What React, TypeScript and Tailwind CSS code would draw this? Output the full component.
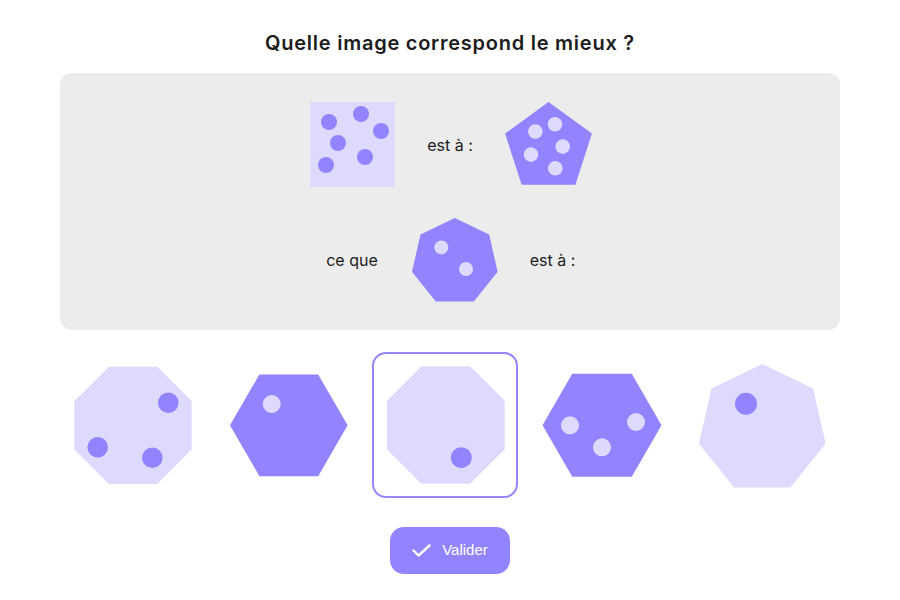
const DARK = "#9184fe";
const LIGHT = "#dedafe";

type Dot = [number, number];

function poly(n: number, cx: number, cy: number, r: number, start: number) {
  const pts: string[] = [];
  for (let i = 0; i < n; i++) {
    const a = ((start + (i * 360) / n) * Math.PI) / 180;
    pts.push(`${(cx + r * Math.cos(a)).toFixed(2)},${(cy + r * Math.sin(a)).toFixed(2)}`);
  }
  return pts.join(" ");
}

function Dots({ dots, r, fill }: { dots: Dot[]; r: number; fill: string }) {
  return (
    <>
      {dots.map(([x, y], i) => (
        <circle key={i} cx={x} cy={y} r={r} fill={fill} />
      ))}
    </>
  );
}

function Option({ selected, children }: { selected?: boolean; children: React.ReactNode }) {
  return (
    <div
      className={
        "w-[146px] h-[146px] rounded-[14px] border-2 shrink-0 " +
        (selected ? "border-[#9487fe]" : "border-transparent")
      }
    >
      <svg width="146" height="146" viewBox="0 0 146 146" className="-m-[2px] block">
        {children}
      </svg>
    </div>
  );
}

export default function App() {
  return (
    <div
      className="min-h-screen bg-white text-[#1c1c1c]"
      style={{ fontFamily: "Inter, 'Noto Sans', sans-serif" }}
    >
      <h1 className="pt-[29px] h-[57px] text-center text-[20px] leading-[28px] font-semibold tracking-[0.75px]">
        Quelle image correspond le mieux ?
      </h1>

      {/* Question panel */}
      <div className="mt-[16px] mx-[60px] h-[257px] rounded-[12px] bg-[#ececec] pt-[29px] flex flex-col items-center gap-[31px]">
        <div className="flex items-center justify-center gap-[30px] h-[85px] w-full pl-[2px]">
          <svg width="85" height="85" viewBox="0 0 85 85" className="block">
            <rect width="85" height="85" fill={LIGHT} />
            <Dots
              r={8}
              fill={DARK}
              dots={[
                [19, 20],
                [51, 12],
                [71, 29],
                [28, 41],
                [55, 55],
                [16, 63],
              ]}
            />
          </svg>
          <span className="w-[50px] text-center text-[16px] whitespace-nowrap">est à :</span>
          <svg width="87" height="85" viewBox="0 0 87 85" className="block">
            <polygon points={poly(5, 43.5, 45.7, 45.7, -90)} fill={DARK} />
            <Dots
              r={7.3}
              fill={LIGHT}
              dots={[
                [30.3, 29.6],
                [50, 22.3],
                [57.7, 44.6],
                [26, 52.6],
                [50.3, 66.3],
              ]}
            />
          </svg>
        </div>
        <div className="flex items-center justify-center gap-[30px] h-[84px] w-full">
          <span className="w-[59px] text-center text-[16px] whitespace-nowrap">ce que</span>
          <svg width="86" height="84" viewBox="0 0 86 84" className="block">
            <polygon points={poly(7, 42.8, 43.9, 43.9, -90)} fill={DARK} />
            <Dots
              r={7}
              fill={LIGHT}
              dots={[
                [29.3, 29.4],
                [54, 51],
              ]}
            />
          </svg>
          <span className="w-[50px] text-center text-[16px] whitespace-nowrap">est à :</span>
        </div>
      </div>

      {/* Answer options */}
      <div className="mt-[22px] px-[60px] flex gap-[10px]">
        <Option>
          <polygon points={poly(8, 73, 73.3, 63.5, 22.5)} fill={LIGHT} />
          <Dots
            r={10.3}
            fill={DARK}
            dots={[
              [108.3, 50.7],
              [37.7, 95.3],
              [92.3, 105.7],
            ]}
          />
        </Option>
        <Option>
          <polygon points={poly(6, 72.8, 73.3, 58.8, 0)} fill={DARK} />
          <Dots r={9} fill={LIGHT} dots={[[55.7, 52]]} />
        </Option>
        <Option selected>
          <polygon points={poly(8, 73.8, 73, 63.7, 22.5)} fill={LIGHT} />
          <Dots r={10.5} fill={DARK} dots={[[89.3, 105.7]]} />
        </Option>
        <Option>
          <polygon points={poly(6, 74, 73.3, 59.5, 0)} fill={DARK} />
          <Dots
            r={9}
            fill={LIGHT}
            dots={[
              [42, 73.3],
              [108, 70],
              [74, 95.3],
            ]}
          />
        </Option>
        <Option>
          <polygon points={poly(7, 78.3, 77, 65, -90)} fill={LIGHT} />
          <Dots r={11} fill={DARK} dots={[[62, 51.7]]} />
        </Option>
      </div>

      {/* Submit */}
      <div className="mt-[29px] flex justify-center">
        <button
          className="w-[120px] h-[47px] rounded-[14px] bg-[#9184fe] text-white flex items-center justify-center gap-[11px] text-[15px]"
          style={{ fontFamily: "'Liberation Sans', Arial, sans-serif" }}
        >
          <svg width="19" height="13" viewBox="0 0 19 13" className="block">
            <polyline
              points="1.5,6.5 6.5,11.5 17.5,1.5"
              fill="none"
              stroke="white"
              strokeWidth="2.4"
              strokeLinecap="round"
              strokeLinejoin="round"
            />
          </svg>
          <span>Valider</span>
        </button>
      </div>
    </div>
  );
}
